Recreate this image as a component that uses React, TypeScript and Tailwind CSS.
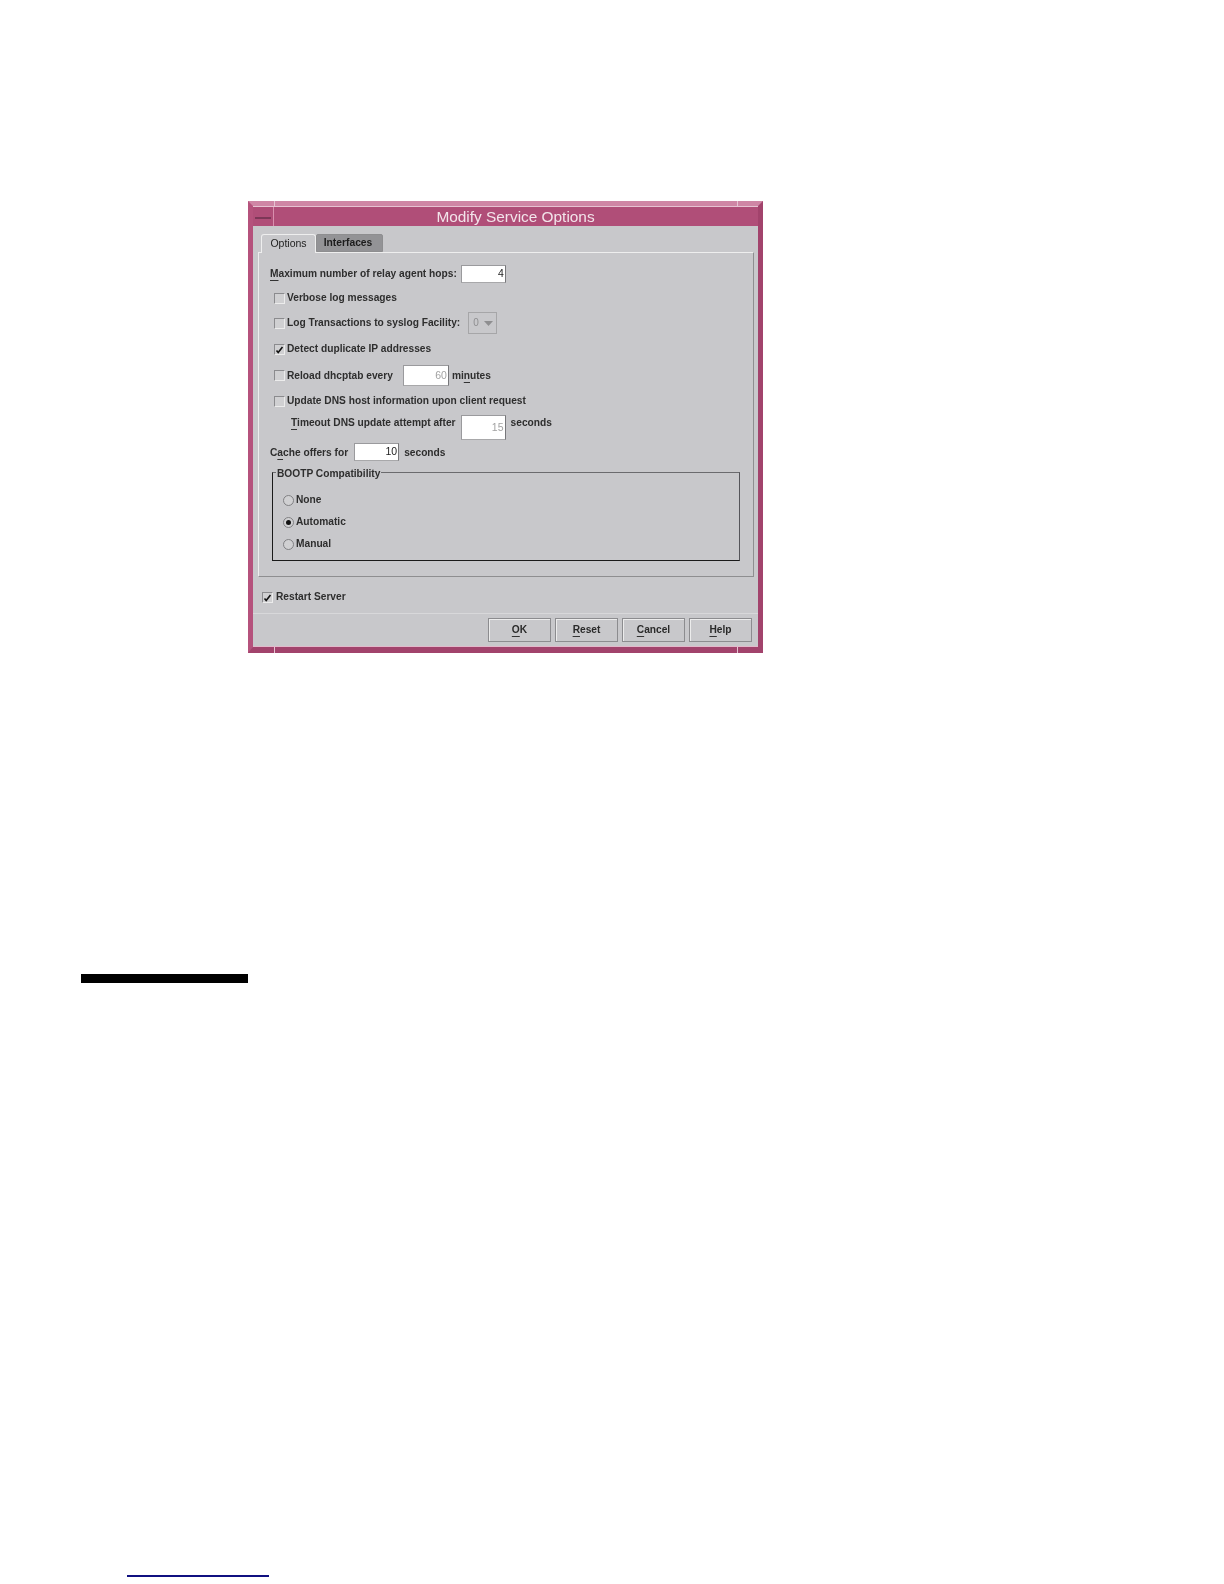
const font = "font-['Liberation_Sans',Arial,sans-serif]";

function U({ children }: { children: string }) {
  return <span className="underline decoration-[#333] decoration-1 underline-offset-[3px]">{children}</span>;
}

function Check({ checked = false }: { checked?: boolean }) {
  return (
    <span className="flex h-[11px] w-[11px] shrink-0 items-center justify-center border border-t-[#8b8b8e] border-l-[#8b8b8e] border-r-[#ececec] border-b-[#ececec] bg-[#d0d0d2]">
      {checked && (
        <svg width="9" height="9" viewBox="0 0 9 9">
          <path d="M1.5 5.5 L3.2 7.5 L7.5 2" fill="none" stroke="#111" strokeWidth="1.6" />
        </svg>
      )}
    </span>
  );
}

function Radio({ checked = false }: { checked?: boolean }) {
  return (
    <span className="flex h-[11px] w-[11px] shrink-0 items-center justify-center rounded-full border border-[#808083] bg-[#d0d0d2]">
      {checked && <span className="h-[5px] w-[5px] rounded-full bg-[#111]" />}
    </span>
  );
}

function Field({ value, w, h, disabled = false }: { value: string; w: string; h: string; disabled?: boolean }) {
  return (
    <span
      className={`flex shrink-0 items-center justify-end border border-t-[#9a9a9d] border-l-[#9a9a9d] border-r-[#77777a] border-b-[#a8a8aa] bg-white pb-[2px] pr-[1px] text-[10.5px] font-normal ${w} ${h} ${disabled ? "text-[#a2a2a2]" : "text-[#222]"}`}
    >
      {value}
    </span>
  );
}

function Btn({ children }: { children: React.ReactNode }) {
  return (
    <span className="flex h-[24px] w-[63px] items-center justify-center border border-[#8c8c8f] bg-[#c8c8cb] text-[10.2px] font-bold text-[#2a2a2a] shadow-[inset_1px_1px_0_#ececec]">
      {children}
    </span>
  );
}

export default function App() {
  return (
    <div className={`h-[1584px] w-[1224px] overflow-hidden bg-white ${font}`}>
      <div className="pl-[248px] pt-[201px]">
        <div className="relative flex h-[452px] w-[515px] flex-col border-[5px] border-b-[6px] border-t-[5px] border-[#b5527c] border-r-[#a2436c] border-b-[#a2436c] border-t-[#cf86a5] bg-[#c8c8cb] text-[10.2px] font-bold leading-[12px] text-[#2e2e2e] blur-[0.35px]">
          <span className="absolute -top-[5px] left-[21px] h-[6px] w-px bg-[#e6c3d2]" />
          <span className="absolute -top-[5px] right-[20px] h-[6px] w-px bg-[#e6c3d2]" />
          <span className="absolute -bottom-[6px] left-[21px] h-[6px] w-px bg-[#e6c3d2]" />
          <span className="absolute -bottom-[6px] right-[20px] h-[6px] w-px bg-[#e6c3d2]" />
          <div className="flex h-[20px] shrink-0 border-t border-[#e6c3d2] bg-[#b04e78]">
            <div className="flex w-[21px] shrink-0 items-center justify-center border-r border-[#d98fae] pt-[2px]">
              <span className="h-[2px] w-[16px] bg-[#7c3757]" />
            </div>
            <div className="flex-1 pr-[1px] text-center text-[15.4px] font-normal leading-[19px] text-[#f2e4ea]">
              Modify Service Options
            </div>
          </div>

          <div className="flex flex-1 flex-col border-b border-[#e2b9cb] pl-[5px] pr-[4px] pt-[8px]">
            <div className="flex h-[18px] items-end pl-[3px]">
              <span className="z-10 -mb-[1px] flex h-[19px] w-[55px] items-center justify-center rounded-t-[3px] border border-b-0 border-[#eeeeee] bg-[#c8c8cb] pb-[3px] text-[10.5px] font-normal text-[#222]">
                Options
              </span>
              <span className="flex h-[18px] w-[67px] items-center justify-center rounded-t-[2px] border border-[#8e8e90] bg-[#939396] pr-[3px] text-[10.3px] text-[#1c1c1c]">
                Interfaces
              </span>
            </div>
            <div className="flex h-[325px] flex-col border border-t-[#eeeeee] border-l-[#eeeeee] border-r-[#8e8e90] border-b-[#8e8e90] pl-[11px] pr-[13px] pt-[12px]">
              <div className="flex h-[18px] items-center gap-[4px]">
                <span><U>M</U>aximum number of relay agent hops:</span>
                <Field value="4" w="w-[45px]" h="h-[18px]" />
              </div>
              <div className="mt-[5px] flex h-[20px] items-center gap-[2px] pl-[4px]">
                <Check />
                <span>Verbose log messages</span>
              </div>
              <div className="mt-[4px] flex h-[22px] items-center gap-[2px] pl-[4px]">
                <Check />
                <span>Log Transactions to syslog Facility:</span>
                <span className="ml-[6px] flex h-[22px] w-[29px] items-center gap-[5px] border border-[#a6a6a8] pl-[4px] text-[10px] font-normal text-[#8e8e90]">
                  0
                  <svg width="9" height="5" viewBox="0 0 9 5"><path d="M0 0 H9 L4.5 5 Z" fill="#8e8e90" /></svg>
                </span>
              </div>
              <div className="mt-[5px] flex h-[20px] items-center gap-[2px] pl-[4px]">
                <Check checked />
                <span>Detect duplicate IP addresses</span>
              </div>
              <div className="mt-[6px] flex h-[21px] items-center pl-[4px]">
                <Check />
                <span className="ml-[2px]">Reload dhcptab every</span>
                <span className="ml-[10px]"><Field value="60" w="w-[46px]" h="h-[21px]" disabled /></span>
                <span className="ml-[3px]">mi<U>n</U>utes</span>
              </div>
              <div className="mt-[5px] flex h-[20px] items-center gap-[2px] pl-[4px]">
                <Check />
                <span>Update DNS host information upon client request</span>
              </div>
              <div className="mt-[4px] flex h-[25px] items-start pl-[21px]">
                <span className="pt-[2px]"><U>T</U>imeout DNS update attempt after</span>
                <span className="ml-[5px]"><Field value="15" w="w-[45px]" h="h-[25px]" disabled /></span>
                <span className="ml-[5px] pt-[2px]">seconds</span>
              </div>
              <div className="mt-[3px] flex h-[18px] items-center">
                <span className="pt-[1px]">C<U>a</U>che offers for</span>
                <span className="ml-[6px]"><Field value="10" w="w-[45px]" h="h-[18px]" /></span>
                <span className="ml-[5px] pt-[1px]">seconds</span>
              </div>
              <div className="relative ml-[2px] mt-[11px] flex h-[89px] flex-col gap-[10px] border border-[#1a1a1a] border-t-[#6b6b6e] border-r-[#55555a] pl-[10px] pt-[21px]">
                <span className="absolute -top-[5px] left-[3px] bg-[#c8c8cb] px-[1px]">BOOTP Compatibility</span>
                <div className="flex h-[12px] items-center gap-[2px]"><Radio /><span>None</span></div>
                <div className="flex h-[12px] items-center gap-[2px]"><Radio checked /><span>Automatic</span></div>
                <div className="flex h-[12px] items-center gap-[2px]"><Radio /><span>Manual</span></div>
              </div>
            </div>
            <div className="mt-[13px] flex h-[14px] items-center gap-[3px] pl-[4px]">
              <Check checked />
              <span>Restart Server</span>
            </div>
            <div className="-ml-[5px] -mr-[4px] mt-[9px] flex flex-1 items-start justify-end gap-[4px] border-t border-[#d8d8da] pr-[6px] pt-[4px]">
              <Btn><U>O</U>K</Btn>
              <Btn><U>R</U>eset</Btn>
              <Btn><U>C</U>ancel</Btn>
              <Btn><U>H</U>elp</Btn>
            </div>
          </div>
        </div>
      </div>
      <div className="ml-[81px] mt-[321px] h-[9px] w-[167px] bg-black" />
      <div className="ml-[127px] mt-[592px] h-[1.5px] w-[142px] bg-[#101080]" />
    </div>
  );
}
